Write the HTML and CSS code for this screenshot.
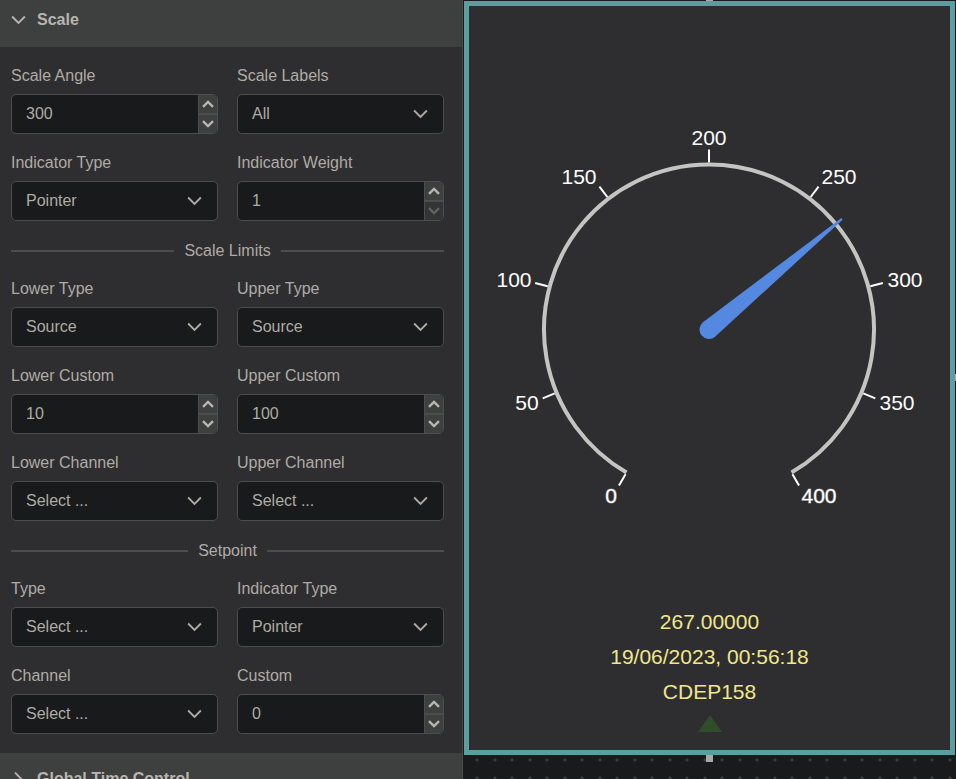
FILE: index.html
```html
<!DOCTYPE html>
<html lang="en">
<head>
    <meta charset="UTF-8">
    <meta name="color-scheme" content="dark">
    <title>Gauge settings</title>
    <meta name="viewport" content="width=device-width, initial-scale=1">
    <link rel="stylesheet" href="styles.css">
</head>
<body>
    <svg class="symbols" aria-hidden="true">
        <symbol id="chevron" viewBox="0 0 16 10">
            <path d="M1.2 1.3 L8 8 L14.8 1.3" fill="none" stroke="currentColor" stroke-width="2"/>
        </symbol>
        <symbol id="arrow" viewBox="0 0 12 8">
            <path d="M1 1.2 L6 6 L11 1.2" fill="none" stroke="currentColor" stroke-width="2.4"/>
        </symbol>
    </svg>

    <div class="layout">
        <aside class="panel">
            <button class="section-header first" aria-expanded="true">
                <svg class="chevron"><use href="#chevron"/></svg>
                Scale
            </button>

            <form class="fields">
                <div class="field">
                    <label for="scaleAngle">Scale Angle</label>
                    <div class="number">
                        <input type="text" inputmode="numeric" id="scaleAngle" value="300">
                        <div class="spinner">
                            <button type="button" aria-label="Increase"><svg class="arrow up"><use href="#arrow"/></svg></button>
                            <button type="button" aria-label="Decrease"><svg class="arrow"><use href="#arrow"/></svg></button>
                        </div>
                    </div>
                </div>
                <div class="field">
                    <label for="scaleLabels">Scale Labels</label>
                    <div class="select">
                        <select id="scaleLabels"><option>All</option></select>
                        <svg class="chevron"><use href="#chevron"/></svg>
                    </div>
                </div>
                <div class="field">
                    <label for="indicatorType">Indicator Type</label>
                    <div class="select">
                        <select id="indicatorType"><option>Pointer</option></select>
                        <svg class="chevron"><use href="#chevron"/></svg>
                    </div>
                </div>
                <div class="field">
                    <label for="indicatorWeight">Indicator Weight</label>
                    <div class="number">
                        <input type="text" inputmode="numeric" id="indicatorWeight" value="1">
                        <div class="spinner">
                            <button type="button" aria-label="Increase"><svg class="arrow up"><use href="#arrow"/></svg></button>
                            <button type="button" aria-label="Decrease" disabled><svg class="arrow"><use href="#arrow"/></svg></button>
                        </div>
                    </div>
                </div>

                <div class="divider">Scale Limits</div>

                <div class="field">
                    <label for="lowerType">Lower Type</label>
                    <div class="select">
                        <select id="lowerType"><option>Source</option></select>
                        <svg class="chevron"><use href="#chevron"/></svg>
                    </div>
                </div>
                <div class="field">
                    <label for="upperType">Upper Type</label>
                    <div class="select">
                        <select id="upperType"><option>Source</option></select>
                        <svg class="chevron"><use href="#chevron"/></svg>
                    </div>
                </div>
                <div class="field">
                    <label for="lowerCustom">Lower Custom</label>
                    <div class="number">
                        <input type="text" inputmode="numeric" id="lowerCustom" value="10">
                        <div class="spinner">
                            <button type="button" aria-label="Increase"><svg class="arrow up"><use href="#arrow"/></svg></button>
                            <button type="button" aria-label="Decrease"><svg class="arrow"><use href="#arrow"/></svg></button>
                        </div>
                    </div>
                </div>
                <div class="field">
                    <label for="upperCustom">Upper Custom</label>
                    <div class="number">
                        <input type="text" inputmode="numeric" id="upperCustom" value="100">
                        <div class="spinner">
                            <button type="button" aria-label="Increase"><svg class="arrow up"><use href="#arrow"/></svg></button>
                            <button type="button" aria-label="Decrease"><svg class="arrow"><use href="#arrow"/></svg></button>
                        </div>
                    </div>
                </div>
                <div class="field">
                    <label for="lowerChannel">Lower Channel</label>
                    <div class="select">
                        <select id="lowerChannel"><option>Select ...</option></select>
                        <svg class="chevron"><use href="#chevron"/></svg>
                    </div>
                </div>
                <div class="field">
                    <label for="upperChannel">Upper Channel</label>
                    <div class="select">
                        <select id="upperChannel"><option>Select ...</option></select>
                        <svg class="chevron"><use href="#chevron"/></svg>
                    </div>
                </div>

                <div class="divider">Setpoint</div>

                <div class="field">
                    <label for="setpointType">Type</label>
                    <div class="select">
                        <select id="setpointType"><option>Select ...</option></select>
                        <svg class="chevron"><use href="#chevron"/></svg>
                    </div>
                </div>
                <div class="field">
                    <label for="setpointIndicator">Indicator Type</label>
                    <div class="select">
                        <select id="setpointIndicator"><option>Pointer</option></select>
                        <svg class="chevron"><use href="#chevron"/></svg>
                    </div>
                </div>
                <div class="field">
                    <label for="setpointChannel">Channel</label>
                    <div class="select">
                        <select id="setpointChannel"><option>Select ...</option></select>
                        <svg class="chevron"><use href="#chevron"/></svg>
                    </div>
                </div>
                <div class="field">
                    <label for="setpointCustom">Custom</label>
                    <div class="number">
                        <input type="text" inputmode="numeric" id="setpointCustom" value="0">
                        <div class="spinner">
                            <button type="button" aria-label="Increase"><svg class="arrow up"><use href="#arrow"/></svg></button>
                            <button type="button" aria-label="Decrease"><svg class="arrow"><use href="#arrow"/></svg></button>
                        </div>
                    </div>
                </div>
            </form>

            <button class="section-header" aria-expanded="false">
                <svg class="chevron closed"><use href="#chevron"/></svg>
                Global Time Control
            </button>
        </aside>

        <main class="canvas">
            <div class="widget">
                <span class="handle handle-top"></span>
                <span class="handle handle-right"></span>
                <span class="handle handle-bottom"></span>

                <svg class="gauge" viewBox="0 0 481 420">
                    <!-- everything is drawn around the dial centre -->
                    <g transform="translate(240 223.5)">
                        <path class="dial" d="M-82.5 142.9 A165 165 0 1 1 82.5 142.9"/>
                        <g class="ticks">
                            <line y1="-167" y2="-180" transform="rotate(-150)"/>
                            <line y1="-167" y2="-180" transform="rotate(-112.5)"/>
                            <line y1="-167" y2="-180" transform="rotate(-75)"/>
                            <line y1="-167" y2="-180" transform="rotate(-37.5)"/>
                            <line y1="-167" y2="-180"/>
                            <line y1="-167" y2="-180" transform="rotate(37.5)"/>
                            <line y1="-167" y2="-180" transform="rotate(75)"/>
                            <line y1="-167" y2="-180" transform="rotate(112.5)"/>
                            <line y1="-167" y2="-180" transform="rotate(150)"/>
                        </g>
                        <g class="labels">
                            <text class="limit" x="-98" y="173">0</text>
                            <text x="-182" y="80">50</text>
                            <text x="-195" y="-43">100</text>
                            <text x="-130" y="-146">150</text>
                            <text x="0" y="-185">200</text>
                            <text x="130" y="-146">250</text>
                            <text x="196" y="-43">300</text>
                            <text x="188" y="80">350</text>
                            <text class="limit" x="110" y="173">400</text>
                        </g>
                        <path class="needle" transform="rotate(50.25)" d="M-9.5 0 L-1 -173 L1 -173 L9.5 0 A9.5 9.5 0 0 1 -9.5 0 Z"/>
                    </g>
                </svg>

                <div class="readings">
                    <div>267.00000</div>
                    <div>19/06/2023, 00:56:18</div>
                    <div>CDEP158</div>
                    <svg class="trend" viewBox="0 0 24 17"><path d="M12 0 L24 17 L0 17 Z"/></svg>
                </div>
            </div>
        </main>
    </div>
</body>
</html>
```

FILE: styles.css
```css
* {
    box-sizing: border-box;
}
body {
    margin: 0;
    font-family: "Liberation Sans", Arial, sans-serif;
    font-size: 16px;
    line-height: 20px;
    background-color: #181a1b;
    color: #aeaba6;
}
.symbols {
    display: none;
}
.layout {
    display: grid;
    grid-template-columns: minmax(0, 463fr) minmax(0, 493fr);
    height: 100vh;
    overflow: hidden;
}

/* settings panel */
.panel {
    background: #2e2e30;
    border-right: 1px solid #4b4b4b;
    overflow: hidden;
}
.section-header {
    display: flex;
    align-items: center;
    gap: 11px;
    width: 100%;
    padding: 16px 11px;
    border: none;
    background: #3e403f;
    color: #b8b5b0;
    font: inherit;
    font-weight: bold;
    text-align: left;
    cursor: pointer;
}
.section-header.first {
    padding-top: 10px;
    padding-bottom: 17px;
}
.chevron {
    width: 15px;
    height: 10px;
}
.chevron.closed {
    transform: rotate(-90deg);
}
.fields {
    display: grid;
    grid-template-columns: repeat(2, minmax(0, 1fr));
    gap: 18px 19px;
    padding: 19px 18px 18px 11px;
}
.field label {
    display: block;
    margin-bottom: 8px;
}
.field {
    padding-bottom: 1px;
}
.divider {
    grid-column: 1 / -1;
    display: flex;
    align-items: center;
    gap: 10px;
    line-height: 21px;
}
.divider::before,
.divider::after {
    content: "";
    flex: 1;
    height: 2px;
    background: #4d4d4e;
}
.select {
    position: relative;
}
.select .chevron {
    position: absolute;
    top: 15px;
    right: 16px;
    pointer-events: none;
}
select,
.number {
    width: 100%;
    height: 40px;
    border: 1px solid #4d4d4e;
    border-radius: 5px;
    background: #181a1b;
}
select {
    display: block;
    appearance: none;
    padding: 0 14px;
    color: inherit;
    font: inherit;
}
.number {
    display: flex;
    overflow: hidden;
}
.number input {
    flex: 1;
    min-width: 0;
    padding: 0 14px;
    border: none;
    background: none;
    color: inherit;
    font: inherit;
}
select:focus,
input:focus {
    outline: none;
}
.spinner {
    display: flex;
    flex-direction: column;
    width: 19px;
    border-left: 1px solid #4d4d4e;
}
.spinner button {
    display: flex;
    flex: 1;
    align-items: center;
    justify-content: center;
    padding: 0;
    border: none;
    background: #3e403f;
    color: #b8b5b0;
    cursor: pointer;
}
.spinner button + button {
    border-top: 2px solid #4d4d4e;
}
.spinner button:disabled {
    background: #333435;
    color: #62625f;
}
.arrow {
    width: 12px;
    height: 8px;
}
.arrow.up {
    transform: rotate(180deg);
}

/* dashboard canvas, dot grid every 35/2 px */
.canvas {
    padding: 1px;
    background-color: #181a1b;
    background-image:
        radial-gradient(circle at 14px 25px, #3b3d3e 1px, transparent 2px),
        radial-gradient(circle at 32px 25px, #3b3d3e 1px, transparent 2px),
        radial-gradient(circle at 14px 8px, #3b3d3e 1px, transparent 2px),
        radial-gradient(circle at 32px 8px, #3b3d3e 1px, transparent 2px);
    background-size: 35px 35px;
}
.widget {
    position: relative;
    padding: 100px 0 18px;
    border: 5px solid #5b9ea0;
    background: #2e2e30;
}
.handle {
    position: absolute;
    width: 7px;
    height: 7px;
    background: #a9a9a9;
}
.handle-top {
    top: -12px;
    left: calc(50% - 4px);
}
.handle-right {
    top: calc(50% - 4px);
    right: -12px;
}
.handle-bottom {
    bottom: -12px;
    left: calc(50% - 4px);
}
.gauge {
    display: block;
    width: 100%;
}
.dial {
    fill: none;
    stroke: #c4c4c2;
    stroke-width: 4;
}
.ticks {
    stroke: #fff;
    stroke-width: 2;
}
.labels {
    fill: #fff;
    font-size: 21px;
    text-anchor: middle;
}
.limit {
    stroke: rgba(255, 255, 255, 0.4);
    stroke-width: 1;
}
.needle {
    fill: #5588e0;
}
.readings {
    padding-top: 78px;
    color: #f0e68c;
    font-size: 21px;
    line-height: 35px;
    text-align: center;
}
.trend {
    display: block;
    width: 24px;
    height: 17px;
    margin: 6px auto 0;
    fill: #2f4d2b;
}
```
